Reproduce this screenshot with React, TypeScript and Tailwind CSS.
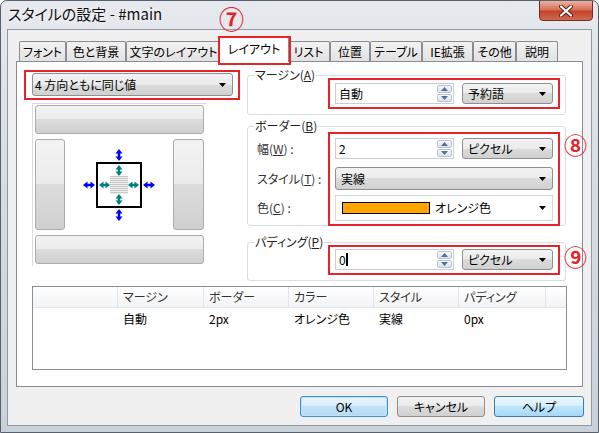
import React from "react";

const FONT =
  "font-['Noto_Sans_CJK_JP','Noto_Sans',sans-serif] [font-feature-settings:'palt']";
const RED = "border-[#e5232b]";
const BTN_BG =
  "bg-[linear-gradient(#f3f3f3_0%,#ebebeb_50%,#dcdcdc_50%,#d0d0d0_100%)]";

function Tri() {
  return (
    <svg width="7" height="4" viewBox="0 0 7 4" className="shrink-0">
      <path d="M0 0h7L3.5 4z" fill="#000" />
    </svg>
  );
}

function Select({ children, className = "" }: { children: React.ReactNode; className?: string }) {
  return (
    <div
      className={`flex items-center justify-between border border-[#8e8f8f] rounded-[3px] ${BTN_BG} pl-[5px] pr-[6px] ${className}`}
    >
      <span className="leading-none">{children}</span>
      <Tri />
    </div>
  );
}

function SpinBtn({ up }: { up?: boolean }) {
  return (
    <div className="flex-1 flex items-center justify-center border border-[#b9c3d3] rounded-[2px] bg-[linear-gradient(#f6f9fc,#dbe3ee)]">
      <svg width="7" height="4" viewBox="0 0 7 4">
        <path d={up ? "M0 4h7L3.5 0z" : "M0 0h7L3.5 4z"} fill="#5a6d93" />
      </svg>
    </div>
  );
}

function SpinInput({ value, caret }: { value: string; caret?: boolean }) {
  return (
    <div className="flex w-[119px] h-[21px] border border-[#c9ced6] bg-white">
      <div className="flex-1 flex items-center pl-[3px] leading-none">
        {value}
        {caret && <span className="w-[2px] h-[13px] bg-black" />}
      </div>
      <div className="flex flex-col w-[15px] py-px mr-px gap-px">
        <SpinBtn up />
        <SpinBtn />
      </div>
    </div>
  );
}

function Group({ label, className, children }: { label: React.ReactNode; className: string; children: React.ReactNode }) {
  return (
    <div className={`relative border border-[#d5dfe5] rounded-[3px] ${className}`}>
      <span className="absolute left-[6px] -top-[8px] bg-white px-[1px] leading-[14px] text-[#222]">
        {label}
      </span>
      {children}
    </div>
  );
}

function Arrow({ x1, y1, x2, y2, color }: { x1: number; y1: number; x2: number; y2: number; color: string }) {
  const v = x1 === x2;
  const head = (px: number, py: number, dir: number) =>
    v
      ? `${px},${py} ${px - 3.5},${py + 4.5 * dir} ${px + 3.5},${py + 4.5 * dir}`
      : `${px},${py} ${px + 4.5 * dir},${py - 3.5} ${px + 4.5 * dir},${py + 3.5}`;
  return (
    <g fill={color} stroke={color}>
      <line x1={v ? x1 : x1 + 3} y1={v ? y1 + 3 : y1} x2={v ? x2 : x2 - 3} y2={v ? y2 - 3 : y2} strokeWidth="2.5" />
      <polygon points={head(x1, y1, 1)} stroke="none" />
      <polygon points={head(x2, y2, -1)} stroke="none" />
    </g>
  );
}

function Diagram() {
  const blue = "#0000ff";
  const teal = "#008080";
  return (
    <svg width="80" height="80" viewBox="0 0 80 80">
      <rect x="31" y="31" width="18" height="18" fill="#eeeeee" />
      {[0, 1, 2, 3, 4, 5, 6, 7, 8].map((i) => (
        <line key={i} x1="31" x2="49" y1={31.5 + i * 2} y2={31.5 + i * 2} stroke="#c8c8c8" strokeWidth="1" />
      ))}
      <rect x="18" y="18" width="44" height="44" fill="none" stroke="#000" strokeWidth="2" />
      <Arrow x1={40} y1={4} x2={40} y2={16} color={blue} />
      <Arrow x1={40} y1={64} x2={40} y2={76} color={blue} />
      <Arrow x1={4} y1={40} x2={16} y2={40} color={blue} />
      <Arrow x1={64} y1={40} x2={76} y2={40} color={blue} />
      <Arrow x1={40} y1={20} x2={40} y2={31} color={teal} />
      <Arrow x1={40} y1={49} x2={40} y2={60} color={teal} />
      <Arrow x1={20} y1={40} x2={31} y2={40} color={teal} />
      <Arrow x1={49} y1={40} x2={60} y2={40} color={teal} />
    </svg>
  );
}

const TABS: [string, number][] = [
  ["フォント", 47],
  ["色と背景", 60],
  ["文字のレイアウト", 95],
  ["レイアウト", 66],
  ["リスト", 43],
  ["位置", 40],
  ["テーブル", 52],
  ["IE拡張", 51],
  ["その他", 43],
  ["説明", 42],
];

const COLS: [string, string, number][] = [
  ["", "", 85],
  ["マージン", "自動", 86],
  ["ボーダー", "2px", 85],
  ["カラー", "オレンジ色", 85],
  ["スタイル", "実線", 85],
  ["パディング", "0px", 87],
];

function PanelButton({ className }: { className: string }) {
  return <div className={`border border-[#acacac] rounded-[3px] ${BTN_BG} ${className}`} />;
}

export default function App() {
  return (
    <div
      className={`relative w-[599px] h-[433px] overflow-hidden rounded-t-[7px] border border-[#56616d] bg-[linear-gradient(180deg,#e6e9ed,#d8dde3_40%,#cbd1d8)] ${FONT} text-[12px] text-black flex flex-col`}
    >
      {/* title bar */}
      <div className="h-[28px] flex items-start justify-between shrink-0">
        <div className="pl-[7px] pt-[3px] text-[15px] leading-[20px] text-[#111] [text-shadow:0_0_6px_#ffffff]">
          スタイルの設定 - #main
        </div>
        <div className="mr-[5px] -mt-px w-[54px] h-[21px] rounded-b-[4px] border border-[#7c2b1f] bg-[linear-gradient(#eab1a3,#d8705a_45%,#c4432a_55%,#d06a52)] flex items-center justify-center">
          <svg width="14" height="12" viewBox="0 0 14 12">
            <path d="M2 1.5L12 10.5M12 1.5L2 10.5" stroke="#5a1d14" strokeWidth="4" strokeLinecap="round" />
            <path d="M2 1.5L12 10.5M12 1.5L2 10.5" stroke="#ffffff" strokeWidth="2.2" strokeLinecap="round" />
          </svg>
        </div>
      </div>

      {/* client */}
      <div className="mx-[6px] mb-[6px] flex-1 border border-[#8f9aa6] bg-[#f0f0f0] flex flex-col">
        {/* tabs */}
        <div className="mt-[7px] ml-[11px] h-[24px] flex items-end">
          {TABS.map(([t, w]) =>
            t === "レイアウト" ? (
              <div
                key={t}
                style={{ width: w + 4 }}
                className="relative z-10 -mx-[2px] -mb-px h-[25px] bg-white border border-b-0 border-[#898c95] rounded-t-[2px] flex justify-center pt-[3px] leading-[16px]"
              >
                {t}
              </div>
            ) : (
              <div
                key={t}
                style={{ width: w }}
                className="h-[20px] border border-b-0 border-[#898c95] rounded-t-[2px] bg-[linear-gradient(#f2f2f2,#e2e2e2)] flex justify-center pt-[2px] leading-[16px]"
              >
                {t}
              </div>
            )
          )}
        </div>

        {/* panel */}
        <div className="mx-[8px] h-[326px] bg-white border border-[#898c95] flex flex-col pl-[7px] pt-[8px]">
          <div className="h-[216px] flex">
            {/* left column */}
            <div className="w-[216px] flex flex-col">
              <div className={`h-[30px] border-2 ${RED} pl-[6px] pt-[1px]`}>
                <Select className="w-[201px] h-[23px] !pl-[2px]">4 方向ともに同じ値</Select>
              </div>
              <div className="mt-[3px] ml-[8px] w-[175px] h-[163px] border-l border-t border-[#dcdcdc] pl-[2px] pt-[1px] flex flex-col">
                <PanelButton className="w-[169px] h-[29px]" />
                <div className="mt-[5px] h-[91px] w-[169px] flex">
                  <PanelButton className="w-[30px] h-full" />
                  <div className="flex-1 flex items-center justify-center">
                    <Diagram />
                  </div>
                  <PanelButton className="w-[31px] h-full" />
                </div>
                <PanelButton className="mt-[5px] w-[169px] h-[29px]" />
              </div>
            </div>

            {/* right column */}
            <div className="ml-[7px] w-[319px] pt-[5px] flex flex-col">
              <Group label={<>マージン(<u>A</u>)</>} className="h-[40px] pl-[80px] pt-[2px]">
                <div className={`w-[232px] border-2 ${RED} px-[5px] pt-[3px] pb-[3px] flex items-center gap-[8px]`}>
                  <SpinInput value="自動" />
                  <Select className="w-[91px] h-[21px]">予約語</Select>
                </div>
              </Group>

              <Group label={<>ボーダー(<u>B</u>)</>} className="mt-[11px] h-[100px] flex">
                <div className="w-[80px] pl-[9px] pt-[11px] flex flex-col text-[#333]">
                  <div className="h-[21px] flex items-center">幅(<u>W</u>) :</div>
                  <div className="mt-[8px] h-[23px] flex items-center">スタイル(<u>T</u>) :</div>
                  <div className="mt-[5px] h-[26px] flex items-center">色(<u>C</u>) :</div>
                </div>
                <div className={`mt-[5px] w-[232px] h-[94px] border-2 ${RED} px-[5px] pt-[4px] flex flex-col`}>
                  <div className="flex items-center gap-[8px]">
                    <SpinInput value="2" />
                    <Select className="w-[91px] h-[21px]">ピクセル</Select>
                  </div>
                  <Select className="mt-[8px] w-[218px] h-[23px]">実線</Select>
                  <div className="mt-[5px] w-[218px] h-[26px] border border-[#d4d8de] bg-white flex items-center pl-[6px] pr-[6px]">
                    <span className="w-[88px] h-[12px] border border-black bg-[#ffa500]" />
                    <span className="ml-[5px] flex-1 leading-none">オレンジ色</span>
                    <Tri />
                  </div>
                </div>
              </Group>

              <Group label={<>パディング(<u>P</u>)</>} className="mt-[16px] h-[39px] pl-[80px] pt-[2px]">
                <div className={`w-[232px] border-2 ${RED} px-[5px] pt-[2px] pb-[3px] flex items-center gap-[8px]`}>
                  <SpinInput value="0" caret />
                  <Select className="w-[91px] h-[21px]">ピクセル</Select>
                </div>
              </Group>
            </div>
          </div>

          {/* list view */}
          <div className="ml-[8px] w-[535px] h-[84px] border border-[#8a8f97] bg-white flex flex-col">
            <div className="h-[21px] flex border-b border-[#e2e4e8] bg-[linear-gradient(#ffffff,#f2f3f5)] text-[#333]">
              {COLS.map(([h, , w], i) => (
                <div key={i} style={{ width: w }} className="border-r border-[#e2e4e8] pl-[5px] flex items-center">
                  {h}
                </div>
              ))}
              <div className="flex-1" />
            </div>
            <div className="h-[21px] flex">
              {COLS.map(([, d, w], i) => (
                <div key={i} style={{ width: w }} className="pl-[5px] flex items-center">
                  {d}
                </div>
              ))}
            </div>
          </div>
        </div>

        {/* buttons */}
        <div className="mt-[9px] pr-[7px] flex justify-end gap-[9px]">
          <div className="w-[88px] h-[21px] rounded-[3px] border border-[#3c8fd8] bg-[linear-gradient(#eaf5fd,#d6ecfb_50%,#c2e2f8_50%,#b6daf5)] shadow-[inset_0_0_0_1px_#bfe2fb] flex items-center justify-center">
            OK
          </div>
          <div className={`w-[88px] h-[21px] rounded-[3px] border border-[#8e8f8f] ${BTN_BG} flex items-center justify-center`}>
            キャンセル
          </div>
          <div className="w-[90px] h-[21px] rounded-[3px] border border-[#3c7fb1] bg-[linear-gradient(#eaf6fd,#d9f0fc_50%,#bee6fd_50%,#a7d9f5)] flex items-center justify-center">
            ヘルプ
          </div>
        </div>
      </div>

      {/* annotations */}
      <div className={`absolute left-[217px] top-[35px] w-[73px] h-[29px] border-2 ${RED} z-20`} />
      <span className="absolute left-[218px] top-[3px] text-[25px] leading-[28px] font-bold text-[#e5232b]">⑦</span>
      <span className="absolute left-[563px] top-[130px] text-[23px] leading-[26px] font-bold text-[#e5232b]">⑧</span>
      <span className="absolute left-[563px] top-[242px] text-[23px] leading-[26px] font-bold text-[#e5232b]">⑨</span>
    </div>
  );
}
